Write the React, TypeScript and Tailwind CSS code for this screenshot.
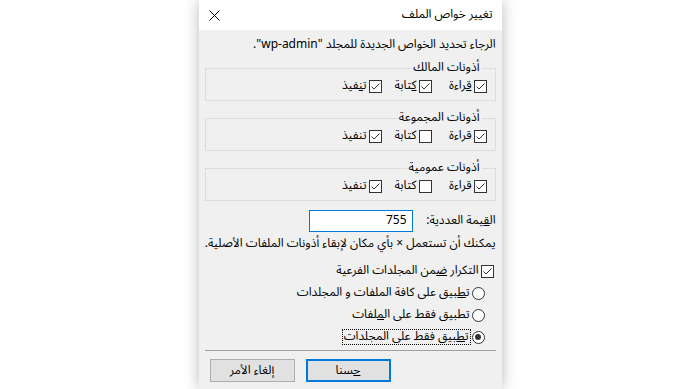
import React from "react";

function Check({ checked }: { checked?: boolean }) {
  return (
    <span className="flex h-[13px] w-[13px] shrink-0 items-center justify-center border border-[#333333] bg-white">
      {checked && (
        <svg width="11" height="11" viewBox="0 0 11 11">
          <path d="M1.5 5.5 L4 8 L9.5 2.5" stroke="#333333" strokeWidth="1" fill="none" />
        </svg>
      )}
    </span>
  );
}

function Radio({ selected }: { selected?: boolean }) {
  return (
    <span className="flex h-[13px] w-[13px] shrink-0 items-center justify-center rounded-full border border-[#333333] bg-white">
      {selected && <span className="h-[6px] w-[6px] rounded-full bg-[#333333]" />}
    </span>
  );
}

function PermGroup({
  title,
  write,
  underline,
}: {
  title: string;
  write: boolean;
  underline?: boolean;
}) {
  return (
    <fieldset className="mt-[9px] border border-[#dcdcdc] pb-[6px] pr-[8px]">
      <legend className="mr-[5px] px-[2px] leading-[16px]">{title}</legend>
      <div className="mt-[2px] flex h-[16px] items-center">
        <label className="flex w-[55px] items-center gap-[2px]">
          <Check checked />
          <span>{underline ? <><u>ق</u>راءة</> : "قراءة"}</span>
        </label>
        <label className="flex w-[50px] items-center gap-[2px]">
          <Check checked={write} />
          <span>{underline ? <><u>ك</u>تابة</> : "كتابة"}</span>
        </label>
        <label className="flex items-center gap-[2px]">
          <Check checked />
          <span>{underline ? <>ت<u>ن</u>فيذ</> : "تنفيذ"}</span>
        </label>
      </div>
    </fieldset>
  );
}

export default function App() {
  return (
    <div className="flex h-[389px] w-full justify-center overflow-hidden bg-white">
      <div
        dir="rtl"
        className="flex h-[389px] w-[303px] flex-col bg-[#f0f0f0] text-[12px] text-black shadow-[0_0_14px_rgba(0,0,0,0.28)] font-['Noto_Sans_Arabic','DejaVu_Sans',sans-serif]"
      >
        <div className="flex h-[30px] shrink-0 items-center justify-between bg-white pl-[10px] pr-[9px]">
          <span>تغيير خواص الملف</span>
          <svg width="11" height="11" viewBox="0 0 11 11">
            <path d="M0.5 0.5 L10.5 10.5 M10.5 0.5 L0.5 10.5" stroke="#000" strokeWidth="1" />
          </svg>
        </div>

        <div className="flex flex-col px-[6px] leading-[16px]">
          <p className="mt-[7px]">الرجاء تحديد الخواص الجديدة للمجلد "wp-admin".</p>

          <div className="mt-[-2px] flex flex-col">
            <PermGroup title="أذونات المالك" write underline />
            <PermGroup title="أذونات المجموعة" write={false} />
            <PermGroup title="أذونات عمومية" write={false} />
          </div>

          <div className="mt-[9px] flex items-center justify-between pl-[104px]">
            <span>
              ال<u>ق</u>يمة العددية:
            </span>
            <div className="flex h-[22px] w-[104px] items-center justify-start border border-[#0078d7] bg-white pr-[5px]">
              <span>755</span>
            </div>
          </div>

          <p className="mt-[4px] whitespace-nowrap">يمكنك أن تستعمل × بأي مكان لإبقاء أذونات الملفات الأصلية.</p>

          <label className="mr-[2px] mt-[11px] flex h-[16px] items-center gap-[2px]">
            <Check checked />
            <span>
              التكرار <u>ض</u>من المجلدات الفرعية
            </span>
          </label>

          <div className="mr-[11px] flex flex-col">
            <label className="mt-[6px] flex h-[16px] items-center gap-[2px]">
              <Radio />
              <span>
                ت<u>ط</u>بيق على كافة الملفات و المجلدات
              </span>
            </label>
            <label className="mt-[6px] flex h-[16px] items-center gap-[2px]">
              <Radio />
              <span>
                تطبيق فقط على ال<u>م</u>لفات
              </span>
            </label>
            <label className="mt-[6px] flex h-[16px] items-center gap-[1px]">
              <Radio selected />
              <span className="border border-dotted border-black px-[1px] leading-[14px]">
                ت<u>ط</u>بيق فقط على المجلدات
              </span>
            </label>
          </div>

          <div className="mt-[5px] h-px bg-[#a0a0a0]" />

          <div className="mt-[8px] flex justify-end gap-[11px] pl-[5px]">
            <button className="h-[23px] w-[85px] border-2 border-[#0078d7] bg-[#e1e1e1]">
              <u>ح</u>سنا
            </button>
            <button className="h-[23px] w-[85px] border border-[#adadad] bg-[#e1e1e1]">
              إلغاء الأمر
            </button>
          </div>
        </div>
      </div>
    </div>
  );
}
